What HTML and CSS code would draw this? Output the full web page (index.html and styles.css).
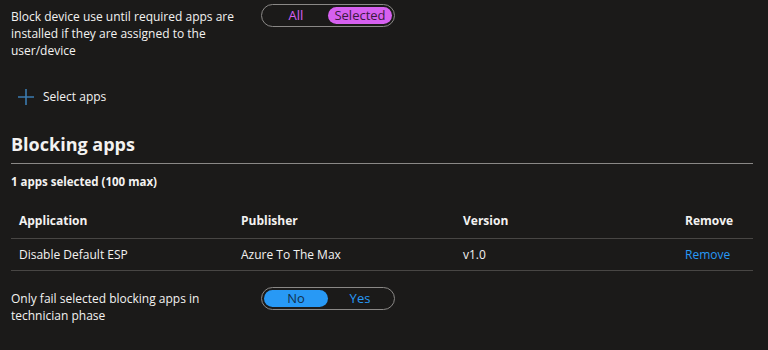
FILE: index.html
```html
<!DOCTYPE html>
<html lang="en">
<head>
    <meta charset="UTF-8">
    <meta name="viewport" content="width=device-width, initial-scale=1.0">
    <title>Blocking apps</title>
    <link rel="stylesheet" href="styles.css">
</head>
<body>
    <div class="page">
        <div class="field-row first">
            <div class="field-label">Block device use until required apps are installed if they are assigned to the user/device</div>
            <div class="toggle purple">
                <span class="opt">All</span>
                <span class="opt on">Selected</span>
            </div>
        </div>

        <button class="add-btn">
            <svg width="16" height="16" viewBox="0 0 16 16"><path d="M8 0v16M0 8h16" stroke="#3b7bb0" stroke-width="1.6" fill="none"/></svg>
            <span>Select apps</span>
        </button>

        <h2 class="section-title">Blocking apps</h2>
        <div class="count">1 apps selected (100 max)</div>

        <div class="table">
            <div class="row head">
                <div class="cell">Application</div>
                <div class="cell">Publisher</div>
                <div class="cell">Version</div>
                <div class="cell">Remove</div>
            </div>
            <div class="row">
                <div class="cell">Disable Default ESP</div>
                <div class="cell">Azure To The Max</div>
                <div class="cell">v1.0</div>
                <div class="cell"><a class="link" href="#">Remove</a></div>
            </div>
        </div>

        <div class="field-row last">
            <div class="field-label">Only fail selected blocking apps in technician phase</div>
            <div class="toggle blue">
                <span class="opt on">No</span>
                <span class="opt">Yes</span>
            </div>
        </div>
    </div>
</body>
</html>
```

FILE: styles.css
```css
body {
    margin: 0;
    background-color: #1b1a19;
    color: #f3f2f1;
    font-family: "Segoe UI", "Open Sans", sans-serif;
    font-size: 12px;
}
.page {
    padding: 0 15px 0 11px;
}

/* label + pill toggle rows */
.field-row {
    display: flex;
    align-items: flex-start;
}
.field-row.first {
    padding-top: 8px;
}
.field-row.last {
    margin-top: 19px;
}
.field-label {
    width: 236px;
    margin-right: 14px;
    line-height: 17px;
}
.toggle {
    display: flex;
    width: 128px;
    height: 17px;
    padding: 2px;
    border: 1px solid #8a8886;
    border-radius: 12px;
}
.first .toggle {
    margin-top: -4px;
}
.last .toggle {
    margin-top: -3px;
}
.toggle .opt {
    flex: 1;
    text-align: center;
    font-size: 13px;
    line-height: 17px;
    border-radius: 10px;
}
.toggle.purple .opt { color: #d660f0; }
.toggle.purple .opt.on { background-color: #d660f0; color: #3b1a42; }
.toggle.blue .opt { color: #2899f5; }
.toggle.blue .opt.on { background-color: #2899f5; color: #12304a; }

.add-btn {
    display: flex;
    align-items: center;
    gap: 9px;
    margin-top: 29px;
    padding: 0 0 0 7px;
    background: none;
    border: none;
    color: #f3f2f1;
    font: inherit;
}

.section-title {
    margin: 26px 0 0;
    padding-bottom: 6px;
    font-size: 18px;
    line-height: 26px;
    border-bottom: 1px solid #8a8886;
}
.count {
    margin-top: 9px;
    font-weight: bold;
    font-size: 11.5px;
    line-height: 18px;
}

.table {
    margin-top: 13px;
}
.row {
    display: grid;
    grid-template-columns: 222px 222px 222px 1fr;
    border-bottom: 1px solid #484644;
}
.row.head {
    font-weight: bold;
}
.cell {
    padding: 8px 8px 7px;
    line-height: 16px;
}
.row.head .cell {
    padding: 9px 8px 9px;
}
.link {
    color: #2899f5;
    text-decoration: none;
}
```
